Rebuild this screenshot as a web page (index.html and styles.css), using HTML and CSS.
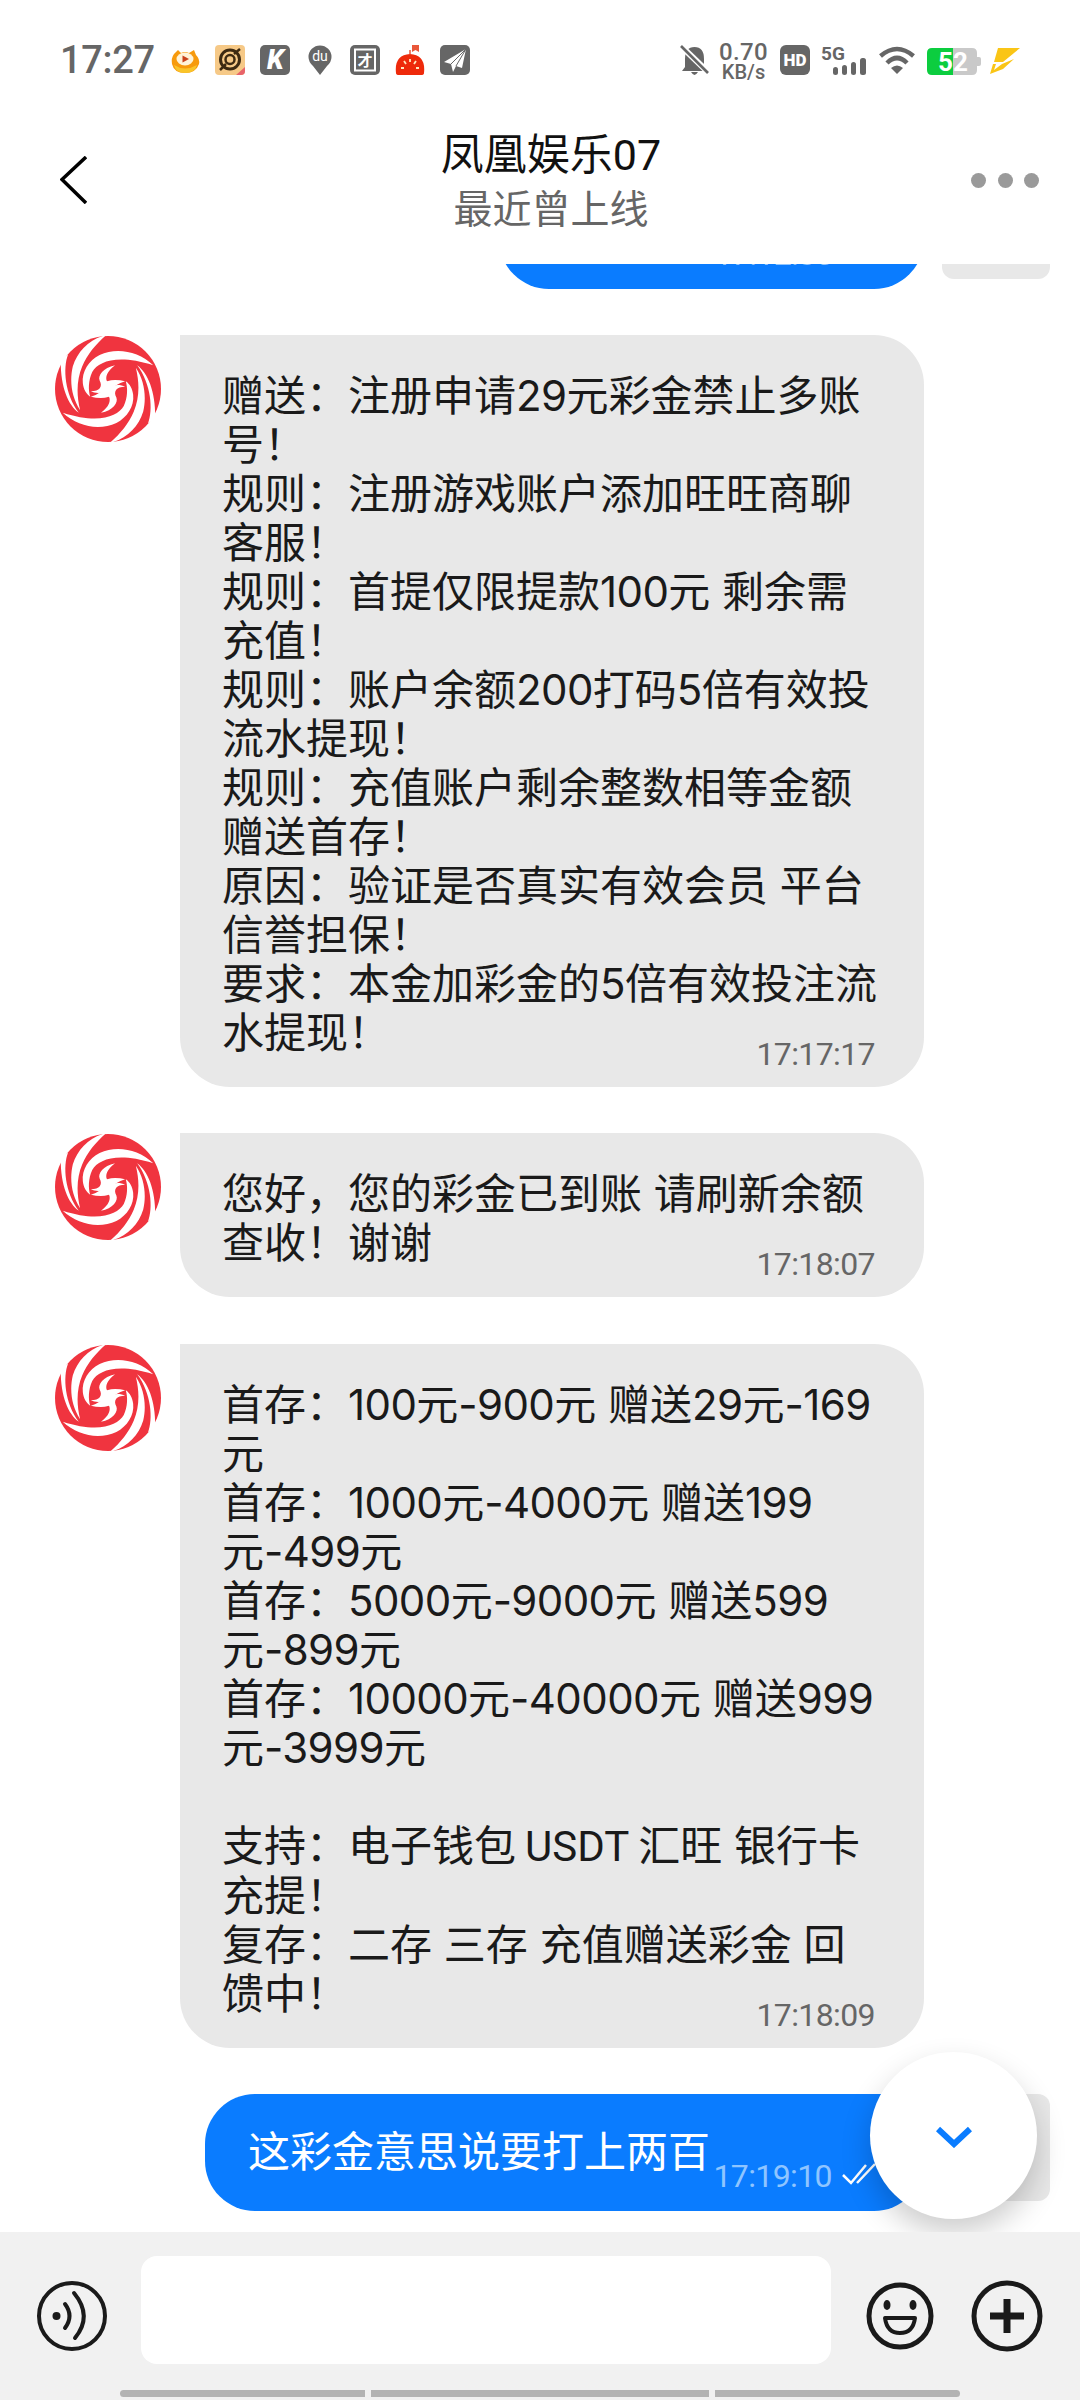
FILE: index.html
```html
<!DOCTYPE html>
<html lang="zh-CN">
<head>
<meta charset="utf-8">
<title>凤凰娱乐07</title>
<link rel="stylesheet" href="styles.css">
</head>
<body>
<svg class="defs" aria-hidden="true">
  <g id="phoenix-half" fill="#fff">
    <path d="M34 92 C42 84 48 78 56 72 C40 112 46 190 88 246 C56 222 34 170 34 92Z"/>
    <path d="M170 14 C120 26 84 62 70 108 C60 150 66 200 92 238 C80 190 82 146 98 108 C114 70 140 40 170 14Z"/>
    <path d="M310 104 C265 62 200 50 150 74 C118 90 96 124 100 158 C102 176 110 190 122 198 C116 178 116 150 128 124 C146 92 205 70 310 104Z"/>
    <path d="M124 182 C150 182 160 168 150 150 C144 134 160 112 196 104 C172 122 166 140 172 152 C190 146 208 148 226 152 C206 158 192 170 176 178 C160 188 140 190 124 182Z"/>
  </g>
  <g id="phoenix">
    <circle cx="175" cy="175" r="158" fill="#f0343f"/>
    <use href="#phoenix-half"/>
    <use href="#phoenix-half" transform="rotate(180 175 175)"/>
  </g>
</svg>

<header class="top">
  <div class="status">
    <span class="clock">17:27</span>
    <div class="apps">
      <svg class="app" viewBox="0 0 30 30">
        <path d="M4 9 L8 5 L11 8 Q15 6 19 8 L24 5 L26 10 Q30 14 29 19 Q26 28 15 28 Q4 28 2 19 Q1 13 4 9Z" fill="#f79a0c"/>
        <path d="M4 20 Q15 27 27 20 Q25 28 15 28 Q6 28 4 20Z" fill="#f9c42a"/>
        <ellipse cx="15" cy="14" rx="8.500" ry="6.500" fill="#fff3d8"/>
        <path d="M12.500 10.500 L19 14 L12.500 17.500Z" fill="#c8411c"/>
      </svg>
      <svg class="app" viewBox="0 0 30 30">
        <rect width="30" height="30" rx="4" fill="#f6c987"/>
        <circle cx="15" cy="14.500" r="9.500" fill="none" stroke="#3d2a12" stroke-width="3"/>
        <circle cx="15" cy="14.500" r="4.500" fill="none" stroke="#3d2a12" stroke-width="2.500"/>
        <path d="M5 25 L11 19 M19 9 L25 4" stroke="#3d2a12" stroke-width="2.500"/>
        <path d="M21 30 L30 22 L30 26 Q30 30 26 30Z" fill="#e8636a"/>
      </svg>
      <svg class="app" viewBox="0 0 30 30">
        <rect width="30" height="30" rx="5" fill="#666"/>
        <text x="15.500" y="24" class="app-k">K</text>
      </svg>
      <svg class="app" viewBox="0 0 30 30">
        <path d="M15 30 L8 21 Q3.500 17 3.500 12 A11.500 11.500 0 0 1 26.500 12 Q26.500 17 22 21Z" fill="#666"/>
        <text x="15" y="16" class="app-du">du</text>
      </svg>
      <svg class="app" viewBox="0 0 30 30">
        <rect width="30" height="30" rx="5" fill="#666"/>
        <rect x="5" y="4.500" width="20" height="21" fill="none" stroke="#fff" stroke-width="2"/>
        <text x="15" y="21" class="app-cai">才</text>
      </svg>
      <svg class="app" viewBox="0 0 30 30">
        <path d="M1 28 Q-1 10 15 9 Q31 10 29 28 Q29 30 26 30 L4 30 Q1 30 1 28Z" fill="#ee2a0b"/>
        <path d="M17 0 H24 V7 L20.500 5 L17 7Z" fill="#e9573a"/>
        <path d="M15 5 V9" stroke="#e9573a" stroke-width="1.500"/>
        <path d="M15 14 V17 M9 16 L11 19 M21 16 L19 19 M6 23 H9 M24 23 H21" stroke="#ffe9c0" stroke-width="1.800"/>
      </svg>
      <svg class="app" viewBox="0 0 30 30">
        <rect width="30" height="30" rx="5" fill="#666"/>
        <path d="M26 4 L4 17 L11 19 L13 27 L16 21 L22 23Z" fill="#fff"/>
        <path d="M26 4 L11 19 M26 4 L16 21" stroke="#666" stroke-width="1"/>
      </svg>
    </div>
    <div class="sys">
      <svg class="bell" viewBox="0 0 29 30">
        <path d="M14.500 2 Q24 2 24 14 L24 22 L27 26 L2 26 L5 22 L5 14 Q5 2 14.500 2Z M11 27 H18 Q16 30 14.500 30 Q13 30 11 27Z" fill="#666"/>
        <path d="M1 1 L28 27" stroke="#fff" stroke-width="6"/>
        <path d="M1 1 L28 28" stroke="#666" stroke-width="2.600"/>
      </svg>
      <div class="speed"><span class="speed-a">0.70</span><span class="speed-b">KB/s</span></div>
      <svg class="hd" viewBox="0 0 30 30">
        <rect width="30" height="30" rx="6" fill="#666"/>
        <text x="15" y="20.500" class="hd-text">HD</text>
      </svg>
      <svg class="sig" viewBox="0 0 47 30">
        <text x="0" y="15" class="sig-text">5G</text>
        <rect x="12" y="22" width="5" height="8" rx="2.500" fill="#666"/>
        <rect x="21" y="20" width="5" height="10" rx="2.500" fill="#666"/>
        <rect x="30" y="17" width="5" height="13" rx="2.500" fill="#666"/>
        <rect x="39" y="13" width="6" height="17" rx="2.500" fill="#666"/>
      </svg>
      <svg class="wifi" viewBox="0 0 36 30">
        <path d="M1.500 11 Q18 -3 34.500 11" fill="none" stroke="#666" stroke-width="4.500"/>
        <path d="M8 18 Q18 8 28 18" fill="none" stroke="#666" stroke-width="4.500"/>
        <path d="M18 29 L12 23 Q18 18 24 23Z" fill="#666"/>
      </svg>
      <svg class="batt" viewBox="0 0 54 30">
        <path d="M26 3 H45 Q50 3 50 8 V25 Q50 30 45 30 H26Z" fill="#c9c9c9"/>
        <path d="M50 12 H52 Q54 12 54 14 V19 Q54 21 52 21 H50Z" fill="#c9c9c9"/>
        <path d="M5 3 H26 V30 H5 Q0 30 0 25 V8 Q0 3 5 3Z" fill="#0ccd3f"/>
        <text x="26" y="26" class="batt-text">52</text>
      </svg>
      <svg class="bolt" viewBox="0 0 30 30">
        <path d="M8 3 H30 L13 17 L4 17Z" fill="#fac516"/>
        <path d="M6 19 L4 25 L12 19 L24 14 L13 24 L0 29 L3 19Z" fill="#fac516"/>
      </svg>
    </div>
  </div>
  <nav class="nav">
    <svg class="back" viewBox="0 0 27 48"><path d="M26 1 L2 23.500 L26 47" fill="none" stroke="#000" stroke-width="3.500"/></svg>
    <div class="who">
      <h1 class="name">凤凰娱乐07</h1>
      <p class="seen">最近曾上线</p>
    </div>
    <div class="dots"><i></i><i></i><i></i></div>
  </nav>
</header>

<main class="chat">
  <div class="list">
    <div class="sent">
      <div class="out out-short">
        <span class="stamp">17:12:30</span>
      </div>
      <div class="side"></div>
    </div>

    <div class="recv">
      <svg class="avatar" viewBox="17 17 316 316"><use href="#phoenix"/></svg>
      <div class="in">赠送：注册申请<span class="num">29</span>元彩金禁止多账<br>号！<br>规则：注册游戏账户添加旺旺商聊<br>客服！<br>规则：首提仅限提款<span class="num">100</span>元 剩余需<br>充值！<br>规则：账户余额<span class="num">200</span>打码<span class="num">5</span>倍有效投<br>流水提现！<br>规则：充值账户剩余整数相等金额<br>赠送首存！<br>原因：验证是否真实有效会员 平台<br>信誉担保！<br>要求：本金加彩金的<span class="num">5</span>倍有效投注流<br>水提现！<span class="time">17:17:17</span></div>
    </div>

    <div class="recv">
      <svg class="avatar" viewBox="17 17 316 316"><use href="#phoenix"/></svg>
      <div class="in">您好，您的彩金已到账 请刷新余额<br>查收！谢谢<span class="time">17:18:07</span></div>
    </div>

    <div class="recv recv-late">
      <svg class="avatar" viewBox="17 17 316 316"><use href="#phoenix"/></svg>
      <div class="in">首存：<span class="num">100</span>元<span class="num">-900</span>元 赠送<span class="num">29</span>元<span class="num">-169</span><br>元<br>首存：<span class="num">1000</span>元<span class="num">-4000</span>元 赠送<span class="num">199</span><br>元<span class="num">-499</span>元<br>首存：<span class="num">5000</span>元<span class="num">-9000</span>元 赠送<span class="num">599</span><br>元<span class="num">-899</span>元<br>首存：<span class="num">10000</span>元<span class="num">-40000</span>元 赠送<span class="num">999</span><br>元<span class="num">-3999</span>元<br><br>支持：电子钱包<span class="usdt">USDT</span>汇旺 银行卡<br>充提！<br>复存：二存 三存 充值赠送彩金 回<br>馈中！<span class="time">17:18:09</span></div>
    </div>

    <div class="sent">
      <div class="out">
        <span class="out-text">这彩金意思说要打上两百</span>
        <span class="stamp">17:19:10</span>
        <svg class="ticks" viewBox="0 0 34 24"><path d="M1 13 L9 21 L24 3 M15 21 L33 2" fill="none" stroke="#fff" stroke-width="2.500"/></svg>
      </div>
      <div class="side"></div>
    </div>
  </div>
  <button class="fab" type="button" aria-label="scroll to bottom">
    <svg class="fab-icon" viewBox="0 0 36 22"><path d="M2 3 L18 18 L34 3" fill="none" stroke="#0a7cff" stroke-width="6"/></svg>
  </button>
</main>

<footer class="bar">
  <div class="tools">
    <svg class="tool" viewBox="0 0 74 74">
      <circle cx="37" cy="37" r="33" fill="none" stroke="#1a1a1a" stroke-width="4"/>
      <circle cx="21.500" cy="37" r="4" fill="#1a1a1a"/>
      <path d="M30 25 Q39 37 30 49" fill="none" stroke="#1a1a1a" stroke-width="4" stroke-linecap="round"/>
      <path d="M39 14 Q58 37 40 59" fill="none" stroke="#1a1a1a" stroke-width="4" stroke-linecap="round"/>
    </svg>
    <div class="field"></div>
    <svg class="tool tool-smile" viewBox="0 0 74 74">
      <circle cx="37" cy="37" r="31" fill="none" stroke="#1a1a1a" stroke-width="5"/>
      <ellipse cx="24" cy="26" rx="3.500" ry="5" fill="#1a1a1a"/>
      <ellipse cx="50" cy="26" rx="3.500" ry="5" fill="#1a1a1a"/>
      <path d="M22 39 H52 Q50 54 37 54 Q24 54 22 39Z" fill="none" stroke="#1a1a1a" stroke-width="4" stroke-linejoin="round"/>
    </svg>
    <svg class="tool tool-plus" viewBox="0 0 74 74">
      <circle cx="37" cy="37" r="33" fill="none" stroke="#1a1a1a" stroke-width="5"/>
      <path d="M20 37 H54 M37 20 V54" fill="none" stroke="#1a1a1a" stroke-width="7"/>
    </svg>
  </div>
  <div class="tabs"><i></i><i></i><i></i></div>
</footer>
</body>
</html>
```

FILE: styles.css
```css
* { box-sizing: border-box; }
html, body { margin: 0; padding: 0; }
body {
  width: 1080px;
  height: 2400px;
  overflow: hidden;
  display: flex;
  flex-direction: column;
  background: #fff;
  font-family: Roboto, "Noto Sans CJK SC", sans-serif;
  color: #1a1a1a;
}
.defs { width: 0; height: 0; position: absolute; }

.top { height: 264px; flex: none; background: #fff; position: relative; z-index: 2; }
.status { height: 90px; padding: 45px 0 0 60px; display: flex; align-items: flex-start; }
.clock { width: 110px; height: 30px; font-size: 38px; line-height: 30px; font-weight: 500; color: #666; letter-spacing: -0.3px; }
.apps { display: flex; gap: 15px; }
.app { width: 30px; height: 30px; display: block; }
.app-k { font: italic 900 27px Roboto, sans-serif; fill: #fff; text-anchor: middle; }
.app-du { font: 400 14px Roboto, sans-serif; fill: #fff; text-anchor: middle; }
.app-cai { font: 700 15px "Noto Sans CJK SC", sans-serif; fill: #fff; text-anchor: middle; }

.sys { margin-left: 210px; display: flex; align-items: flex-start; }
.sys svg { display: block; height: 30px; }
.bell { width: 29px; }
.speed { margin-left: 11px; width: 47px; display: flex; flex-direction: column; align-items: center; color: #666; margin-top: -3px; }
.speed-a { font-size: 24px; line-height: 21px; font-weight: 500; letter-spacing: 0.4px; }
.speed-b { font-size: 20px; line-height: 19px; font-weight: 500; margin-top: 0; }
.hd { width: 30px; margin-left: 13px; }
.hd-text { font: 900 17px Roboto, sans-serif; fill: #fff; text-anchor: middle; }
.sig { width: 47px; margin-left: 11px; }
.sig-text { font: 700 19px Roboto, sans-serif; fill: #666; }
.wifi { width: 36px; margin-left: 11px; }
.batt { width: 54px; margin-left: 12px; }
.batt-text { font: 700 26px Roboto, sans-serif; fill: #fff; text-anchor: middle; }
.bolt { width: 30px; margin-left: 9px; }

.nav { height: 174px; padding: 6px 41px 0 60px; display: flex; align-items: center; }
.back { width: 27px; height: 48px; flex: none; }
.who { flex: 1; padding-left: 44px; margin-top: 5px; text-align: center; }
.name { margin: 0; font-size: 43px; line-height: 50px; font-weight: 400; color: #111; }
.seen { margin: 5px 0 0; font-size: 39px; line-height: 50px; color: #666; }
.dots { width: 68px; display: flex; justify-content: space-between; }
.dots i { width: 15px; height: 15px; border-radius: 50%; background: #9a9a9a; }

.chat { position: relative; flex: 1; overflow: hidden; background: #fff; }
.list { margin-top: -92px; display: flex; flex-direction: column; gap: 46px; }
.recv { display: flex; gap: 19px; padding-left: 55px; align-items: flex-start; }
.recv-late { margin-top: 1px; }
.avatar { width: 106px; height: 106px; flex: none; margin-top: 1px; }
.in {
  position: relative;
  width: 744px;
  padding: 36px 44px 30px 42px;
  background: #e8e8e8;
  border-radius: 0 50px 50px 50px;
  font-family: Inter, "Noto Sans CJK SC", sans-serif;
  font-size: 42px;
  line-height: 49px;
  white-space: nowrap;
}
.num { letter-spacing: -0.6px; }
.usdt { font-family: Roboto, sans-serif; padding: 0 9px; }
.time {
  position: absolute;
  right: 49px;
  bottom: 18px;
  font-family: Roboto, sans-serif;
  font-size: 32px;
  line-height: 30px;
  letter-spacing: -0.6px;
  color: #666;
}
.sent { display: flex; justify-content: flex-end; align-items: flex-start; gap: 18px; padding-right: 30px; }
.out {
  width: 719px;
  height: 117px;
  padding: 0 48px 0 43px;
  display: flex;
  justify-content: flex-end;
  background: #0a7cff;
  border-radius: 50px 0 50px 50px;
  color: #fff;
}
.out-short { width: 425px; padding-right: 91px; }
.out-text { margin: 34px auto 0 0; font-size: 42px; line-height: 49px; white-space: nowrap; }
.stamp { align-self: flex-end; margin-bottom: 20px; font-size: 32px; line-height: 30px; letter-spacing: -0.6px; color: #8fc5ff; }
.ticks { align-self: flex-end; width: 34px; height: 24px; margin: 0 0 25px 10px; }
.side { width: 108px; height: 107px; flex: none; background: #e8e8e8; border-radius: 0 12px 12px 12px; }
.out-short + .side { border-radius: 12px; }

.fab {
  position: absolute;
  left: 870px;
  bottom: 13px;
  width: 167px;
  height: 167px;
  padding: 0;
  border: 0;
  border-radius: 50%;
  background: #fff;
  box-shadow: 0 14px 30px rgba(0, 0, 0, 0.2);
  display: flex;
  align-items: flex-start;
  justify-content: center;
}
.fab-icon { width: 36px; height: 22px; margin-top: 74px; }

.bar { height: 168px; flex: none; background: #f1f1f1; padding-top: 24px; }
.tools { display: flex; align-items: flex-start; padding-left: 35px; }
.tool { width: 74px; height: 74px; flex: none; margin-top: 23px; }
.field { width: 690px; height: 108px; margin-left: 32px; background: #fff; border-radius: 16px; }
.tool-smile { margin-left: 32px; }
.tool-plus { margin-left: 33px; }
.tabs { margin: 26px 0 0 120px; display: flex; gap: 6px; }
.tabs i { display: block; height: 7px; background: #b3b3b3; }
.tabs i:nth-child(1) { width: 245px; border-radius: 4px 0 0 4px; }
.tabs i:nth-child(2) { width: 338px; }
.tabs i:nth-child(3) { width: 245px; border-radius: 0 4px 4px 0; }
```
